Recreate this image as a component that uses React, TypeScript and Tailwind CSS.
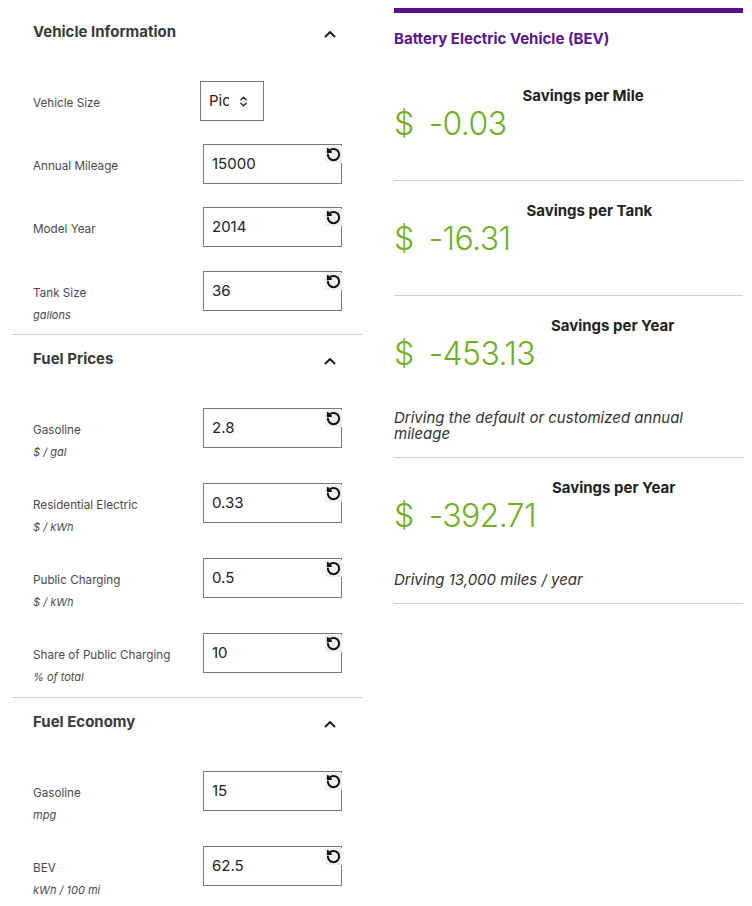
import React from "react";
import { RotateCcw, ChevronsUpDown } from "lucide-react";

function ChevronUp() {
  return (
    <svg width="14" height="14" viewBox="0 0 14 14" className="mt-[6px]">
      <path d="M2.5 9.5 7 5l4.5 4.5" fill="none" stroke="#222" strokeWidth="2" strokeLinecap="round" strokeLinejoin="round" />
    </svg>
  );
}

function NumInput({ value }: { value: string }) {
  return (
    <div className="relative w-[139px] h-[40px] border border-[#7a7a7a] bg-white flex items-center pl-[8px] text-[15px] text-[#222]">
      {value}
      <div className="absolute right-[-1px] top-[1px] w-[17px] h-[17px] bg-[#efefef] flex items-center justify-center">
        <RotateCcw size={15} strokeWidth={3.2} color="#111" />
      </div>
    </div>
  );
}

function Row({ label, sub, value, h }: { label: string; sub?: string; value: string; h: string }) {
  return (
    <div className={`flex pl-[21px] ${h}`}>
      <div className="w-[170px] pt-[14px]">
        <div className="text-[11.7px] leading-4 text-[#4a4a4a]">{label}</div>
        {sub && <div className="mt-[6px] text-[11px] leading-4 italic text-[#4a4a4a]">{sub}</div>}
      </div>
      <NumInput value={value} />
    </div>
  );
}

function Header({ title }: { title: string }) {
  return (
    <div className="h-[73px] pl-[21px] pr-[25px] pt-[13px] flex justify-between items-start">
      <h2 className="text-[15px] leading-[22px] font-bold text-[#3a3a3a]">{title}</h2>
      <ChevronUp />
    </div>
  );
}

function Card({ title, value, note, first }: { title: string; value: string; note?: React.ReactNode; first?: boolean }) {
  return (
    <div className={`border-b border-[#cfcfcf] pt-[20px] ${note ? "pb-[15px]" : "pb-[36px]"} ${first ? "mt-[17px]" : ""}`}>
      <div className="flex items-start">
        <div className="mt-[18px] flex items-center text-[32px] leading-[40px] font-light tracking-[-0.6px] text-[#6fb023] whitespace-nowrap">
          <span>$</span>
          <span className="ml-[15px]">{value}</span>
        </div>
        <div className="ml-[16px] text-[15px] leading-5 font-bold text-[#222] whitespace-nowrap">{title}</div>
      </div>
      {note && <p className="mt-[36px] text-[15px] leading-4 italic text-[#333]">{note}</p>}
    </div>
  );
}

export default function App() {
  return (
    <div className="w-[752px] min-h-[906px] bg-white flex font-['Inter',sans-serif] text-[#222]">
      <div className="ml-[12px] w-[350px] pt-[8px]">
        <section>
          <Header title="Vehicle Information" />
          <div className="flex pl-[21px] h-[63px]">
            <div className="w-[167px] pt-[14px]">
              <div className="text-[11.7px] leading-4 text-[#4a4a4a]">Vehicle Size</div>
            </div>
            <div className="w-[64px] h-[40px] border border-[#7a7a7a] flex items-center pl-[8px] text-[15px] text-[#222]">
              <span className="w-[20px] overflow-hidden whitespace-nowrap">Pic</span>
              <ChevronsUpDown size={13} strokeWidth={2.6} color="#222" className="ml-[8px]" />
            </div>
          </div>
          <Row label="Annual Mileage" value="15000" h="h-[63px]" />
          <Row label="Model Year" value="2014" h="h-[64px]" />
          <Row label="Tank Size" sub="gallons" value="36" h="h-[63px]" />
        </section>
        <section className="border-t border-[#cfcfcf]">
          <Header title="Fuel Prices" />
          <div className="flex flex-col gap-[11px]">
            <Row label="Gasoline" sub="$ / gal" value="2.8" h="h-[64px]" />
            <Row label="Residential Electric" sub="$ / kWh" value="0.33" h="h-[64px]" />
            <Row label="Public Charging" sub="$ / kWh" value="0.5" h="h-[64px]" />
            <Row label="Share of Public Charging" sub="% of total" value="10" h="h-[64px]" />
          </div>
        </section>
        <section className="border-t border-[#cfcfcf]">
          <Header title="Fuel Economy" />
          <div className="flex flex-col gap-[11px]">
            <Row label="Gasoline" sub="mpg" value="15" h="h-[64px]" />
            <Row label="BEV" sub="kWh / 100 mi" value="62.5" h="h-[64px]" />
          </div>
        </section>
      </div>
      <div className="ml-[32px] w-[349px] pt-[8px]">
        <div className="h-[5px] bg-[#580f8e]" />
        <h1 className="mt-[16px] text-[15px] leading-5 font-bold text-[#5a1590]">Battery Electric Vehicle (BEV)</h1>
        <Card first title="Savings per Mile" value="-0.03" />
        <Card title="Savings per Tank" value="-16.31" />
        <Card
          title="Savings per Year"
          value="-453.13"
          note={
            <>
              Driving the default or customized annual
              <br />
              mileage
            </>
          }
        />
        <Card title="Savings per Year" value="-392.71" note="Driving 13,000 miles / year" />
      </div>
    </div>
  );
}
